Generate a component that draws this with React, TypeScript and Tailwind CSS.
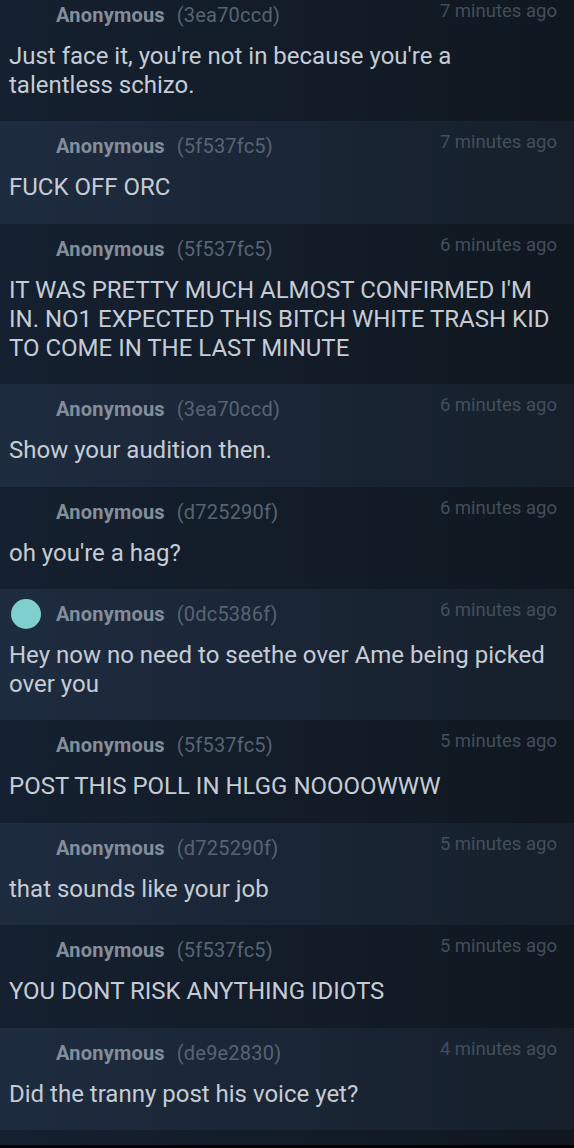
import React from "react";

type Post = { hash: string; time: string; lines: string; avatar?: boolean };

const posts: Post[] = [
  { hash: "3ea70ccd", time: "7 minutes ago", lines: "Just face it, you're not in because you're a talentless schizo." },
  { hash: "5f537fc5", time: "7 minutes ago", lines: "FUCK OFF ORC" },
  { hash: "5f537fc5", time: "6 minutes ago", lines: "IT WAS PRETTY MUCH ALMOST CONFIRMED I'M IN. NO1 EXPECTED THIS BITCH WHITE TRASH KID TO COME IN THE LAST MINUTE" },
  { hash: "3ea70ccd", time: "6 minutes ago", lines: "Show your audition then." },
  { hash: "d725290f", time: "6 minutes ago", lines: "oh you're a hag?" },
  { hash: "0dc5386f", time: "6 minutes ago", lines: "Hey now no need to seethe over Ame being picked over you", avatar: true },
  { hash: "5f537fc5", time: "5 minutes ago", lines: "POST THIS POLL IN HLGG NOOOOWWW" },
  { hash: "d725290f", time: "5 minutes ago", lines: "that sounds like your job" },
  { hash: "5f537fc5", time: "5 minutes ago", lines: "YOU DONT RISK ANYTHING IDIOTS" },
  { hash: "de9e2830", time: "4 minutes ago", lines: "Did the tranny post his voice yet?" },
];

function Row({ p, i }: { p: Post; i: number }) {
  const light = i % 2 === 1;
  return (
    <div
      className={
        (light
          ? "bg-gradient-to-r from-[#1e2c40] to-[#161f2b]"
          : "bg-gradient-to-r from-[#152030] to-[#10171f]") +
        " pt-[12px] pb-[21.4px] pl-[9px] pr-[17px]"
      }
    >
      <div className="flex items-start justify-between h-[26px]">
        <div className="flex items-center h-[26px]">
          <div className="w-[47px] h-[26px] flex items-center pl-[2px]">
            {p.avatar && <div className="w-[30px] h-[30px] rounded-full bg-[#7fcfcf]" />}
          </div>
          <span className="text-[20px] leading-[26px] font-bold text-[#848e9b] tracking-[0.2px]">Anonymous</span>
          <span className="text-[20px] leading-[26px] text-[#576473] ml-[12px] tracking-[0.2px]">({p.hash})</span>
        </div>
        <span className="text-[18.5px] leading-[18px] text-[#434e5c]">{p.time}</span>
      </div>
      <div className="mt-[14px] text-[24px] leading-[29px] text-[#c5ccd5]">{p.lines}</div>
    </div>
  );
}

export default function App() {
  return (
    <div
      className="w-[574px] h-[1148px] overflow-hidden bg-[#000000] flex flex-col"
      style={{ fontFamily: "Roboto, 'Noto Sans', sans-serif" }}
    >
      <div className="flex flex-col -mt-[10px]">
        {posts.map((p, i) => (
          <Row key={i} p={p} i={i} />
        ))}
        <div className="h-[15px] bg-gradient-to-r from-[#152030] to-[#10171f]" />
      </div>
    </div>
  );
}
